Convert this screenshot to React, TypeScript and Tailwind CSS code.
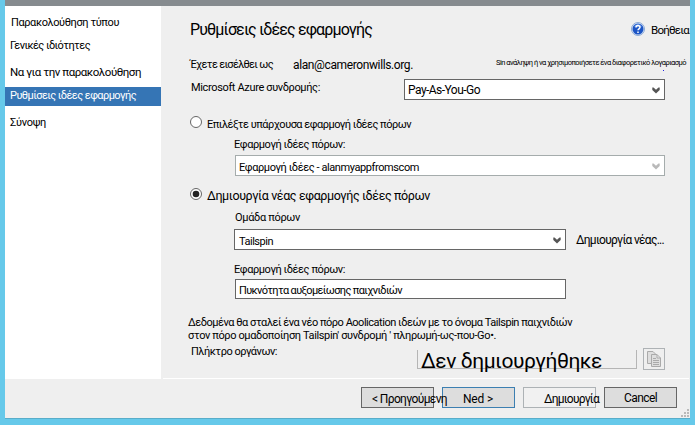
import { useLayoutEffect, useRef, useState } from "react";
import clsx from "clsx";

type LabelProps = { text: string; width: number; className?: string };

// Single line label whose tracking is adjusted so that it spans `width` pixels.
function Label({ text, width, className }: LabelProps) {
  const ref = useRef<HTMLSpanElement>(null);
  const [tracking, setTracking] = useState(0);
  useLayoutEffect(() => {
    if (ref.current) {
      const natural = ref.current.getBoundingClientRect().width;
      setTracking((width - natural) / text.length);
    }
  }, []);
  return (
    <div className={clsx("h-4 w-0 shrink-0 whitespace-nowrap", className)}>
      <span ref={ref} style={{ letterSpacing: tracking }}>
        {text}
      </span>
    </div>
  );
}

function Chevron({ className }: { className: string }) {
  return (
    <svg width="8" height="7" viewBox="0 0 8 7" className={clsx("mt-px shrink-0", className)}>
      <path d="M.3 .5H1.500L4 2.800 6.500 .5H7.700V3L4 6.500 .3 3Z" fill="currentColor" />
    </svg>
  );
}

function Radio({ checked }: { checked?: boolean }) {
  return (
    <svg width="12" height="12" viewBox="0 0 12 12" className="shrink-0">
      <circle cx="6" cy="6" r="5.5" fill="white" stroke="#666" />
      {checked && <circle cx="6" cy="6" r="3.3" fill="#222" />}
    </svg>
  );
}

export default function App() {
  return (
    <div className="flex h-[425px] w-[695px] flex-col overflow-hidden bg-[#66c9ea] px-[5px] text-[12px]/[16px] text-black [font-family:Roboto,'Liberation_Sans',sans-serif]">
      <div className="h-1.5 shrink-0 bg-[#868b8f]" />
      <div className="flex h-[413px] shrink-0 flex-col border-b border-[#58adc9] bg-[#efefef]">
        <div className="flex h-[373px] shrink-0">
          <nav className="flex w-[156px] shrink-0 flex-col bg-white pt-2">
            <Label text="Παρακολούθηση τύπου" width={108} className="ml-1.5 text-[11px]/[18px]" />
            <Label text="Γενικές ιδιότητες" width={80} className="mt-[7px] ml-[5px] text-[11px]/[18px]" />
            <Label text="Να για την παρακολούθηση" width={131} className="mt-[11px] ml-[5px] text-[11.5px]/[16px]" />
            <div className="mt-[7px] flex h-[19px] shrink-0 bg-[#3575b5] pl-[5px] text-white">
              <Label text="Ρυθμίσεις ιδέες εφαρμογής" width={126} className="text-[11px]/[18px]" />
            </div>
            <Label text="Σύνοψη" width={36} className="mt-2 ml-[5px] text-[11px]/[18px]" />
          </nav>

          <main className="flex w-[529px] shrink-0 flex-col">
            <header className="flex h-[46px] shrink-0 items-start pt-4 pl-[29px]">
              <Label text="Ρυθμίσεις ιδέες εφαρμογής" width={182} className="text-[16px]/[16px]" />
              <svg width="14" height="14" viewBox="0 0 14 14" className="ml-[441px] shrink-0">
                <circle cx="7" cy="7" r="6.5" fill="#dce8f7" stroke="#8ba9d6" />
                <circle cx="7" cy="7" r="5.5" fill="#1d55c5" />
                <path d="M3 4.5C4.5 1.5 9.500 1.500 11 4.500Q7 6 3 4.500Z" fill="#5f91e6" />
                <path d="M5 5.500C5 3 9 3 9 5.300C9 6.800 7 6.800 7 8.300M7 9.500V11" fill="none" stroke="white" strokeWidth="1.5" />
              </svg>
              <Label text="Βοήθεια" width={38} className="-mt-px ml-1.5 text-[11.5px]/[18px]" />
            </header>

            <div className="flex h-[27px] shrink-0 items-start pt-1 pl-[29px]">
              <Label text="Έχετε εισέλθει ως" width={83} className="text-[11px]/[18px]" />
              <Label text="alan@cameronwills.org." width={120} className="mt-px ml-[103px]" />
              <Label text="Sin ανάληψη ή να χρησιμοποιήσετε ένα διαφορετικό λογαριασμό" width={190} className="-mt-px ml-[203px] text-[7.5px]/[16px]" />
              <div className="mt-[14px] ml-[167px] size-px bg-[#2020e0]" />
            </div>

            <div className="flex h-[21px] shrink-0 items-start pl-[30px]">
              <Label text="Microsoft Azure συνδρομής:" width={129} className="text-[11px]/[18px]" />
              <div className="ml-[213px] flex h-[21px] w-[261px] shrink-0 items-center justify-between border border-[#666] bg-white pr-1 pl-[3px]">
                <Label text="Pay-As-You-Go" width={72} className="mt-px" />
                <Chevron className="text-[#555]" />
              </div>
            </div>

            <div className="mt-4 flex h-[21px] shrink-0 items-start pl-[29px]">
              <Radio />
              <Label text="Επιλέξτε υπάρχουσα εφαρμογή ιδέες πόρων" width={204} className="ml-[5px] text-[11px]/[18px]" />
            </div>

            <section className="flex h-[51px] shrink-0 flex-col items-start pl-[73px]">
              <Label text="Εφαρμογή ιδέες πόρων:" width={111} className="-mt-px text-[11px]/[18px]" />
              <div className="mt-[3px] ml-px flex h-[21px] w-[430px] items-center justify-between border border-[#a5acac] bg-white pr-1 pl-[3px]">
                <Label text="Εφαρμογή ιδέες - alanmyappfromscom" width={180} className="mt-[3px] text-[11px]/[18px]" />
                <Chevron className="text-[#b9b9b9]" />
              </div>
            </section>

            <div className="flex h-5 shrink-0 items-start pl-[29px]">
              <Radio checked />
              <Label text="Δημιουργία νέας εφαρμογής ιδέες πόρων" width={223} className="ml-[5px] text-[12.5px]/[16px]" />
            </div>

            <section className="flex h-[42px] shrink-0 flex-col items-start pt-px pl-[73px]">
              <Label text="Ομάδα πόρων" width={65} className="ml-px text-[11px]/[18px]" />
              <div className="mt-1 flex items-start">
                <div className="flex h-[21px] w-[332px] shrink-0 items-center justify-between border border-[#666] bg-white pr-1 pl-1">
                  <Label text="Tailspin" width={34} className="mt-[3px] text-[11px]/[18px]" />
                  <Chevron className="text-[#555]" />
                </div>
                <Label text="Δημιουργία νέας..." width={88} className="mt-[3px] ml-[10px]" />
              </div>
            </section>

            <section className="mt-[11px] flex h-[38px] shrink-0 flex-col items-start pl-[73px]">
              <Label text="Εφαρμογή ιδέες πόρων:" width={111} className="text-[11px]/[18px]" />
              <div className="mt-[2px] ml-px flex h-5 w-[331px] shrink-0 items-start border border-[#666] bg-white pt-[2px] pl-[3px]">
                <Label text="Πυκνότητα αυξομείωσης παιχνιδιών" width={163} className="text-[11px]/[18px]" />
              </div>
            </section>

            <div className="mt-[15px] flex h-[29px] shrink-0 flex-col pl-[27px] text-[11px]/[18px]">
              <Label text="Δεδομένα θα σταλεί ένα νέο πόρο Aoolication ιδεών με το όνομα Tailspin παιχνιδιών" width={384} className="-mb-[3px]" />
              <Label text="στον πόρο ομαδοποίηση Tailspin' συνδρομή ' πληρωμή-ως-που-Go•." width={308} />
            </div>

            <div className="flex h-[35px] shrink-0 items-start pl-[30px]">
              <Label text="Πλήκτρο οργάνων:" width={86} className="text-[11px]/[18px]" />
              <div className="mt-[7px] ml-[226px] flex h-[19px] w-[220px] shrink-0 items-end border border-t-0 border-[#b5b5b5] pl-[3px]">
                <Label text="Δεν δημιουργήθηκε" width={181} className="-mb-px text-[21px]/[16px]" />
              </div>
              <div className="mt-[5px] ml-1.5 flex size-[22px] shrink-0 items-center justify-center border border-[#aeb2b5]">
                <svg width="14" height="16" viewBox="0 0 14 16" fill="#dedede" stroke="#aaa">
                  <path d="M.5.5H6L9.5 4V12.500H.5Z" />
                  <path d="M4.500 3.500H10L13.500 7V15.500H4.500ZM10 3.500V7H13.500M6 7.500H9M6 9.500H12M6 11.500H12M6 13.500H12" />
                </svg>
              </div>
            </div>
            <div className="ml-0.5 h-px w-[526px] shrink-0 bg-white" />
          </main>
        </div>

        <footer className="flex h-[39px] shrink-0 items-start gap-2 pt-2 pl-[356px]">
          <div className="flex h-[21px] w-[73px] shrink-0 border border-[#666] bg-[#ddd] pt-[3px] pl-[10px]">
            <Label text="< Προηγούμενη" width={75} className="relative z-10" />
          </div>
          <div className="flex h-[21px] w-[73px] shrink-0 border border-[#3c7fb1] bg-[#ddd] pt-[3px] pl-5">
            <Label text="Ned >" width={30} />
          </div>
          <div className="flex h-[21px] w-[73px] shrink-0 border border-[#adb2b5] bg-[#f1f1f1] pt-[3px] pl-5">
            <Label text="Δημιουργία" width={55} />
          </div>
          <div className="flex h-[21px] w-[73px] shrink-0 border border-[#666] bg-[#ddd] pt-[2px] pl-[19px]">
            <Label text="Cancel" width={33} />
          </div>
          <svg width="8" height="8" viewBox="0 0 8 8" className="mt-[22px] -ml-1 shrink-0" fill="#b9b9b9">
            <path d="M6 0h2v2H6ZM3 3h2v2H3ZM6 3h2v2H6ZM0 6h2v2H0ZM3 6h2v2H3ZM6 6h2v2H6Z" />
          </svg>
        </footer>
      </div>
    </div>
  );
}
